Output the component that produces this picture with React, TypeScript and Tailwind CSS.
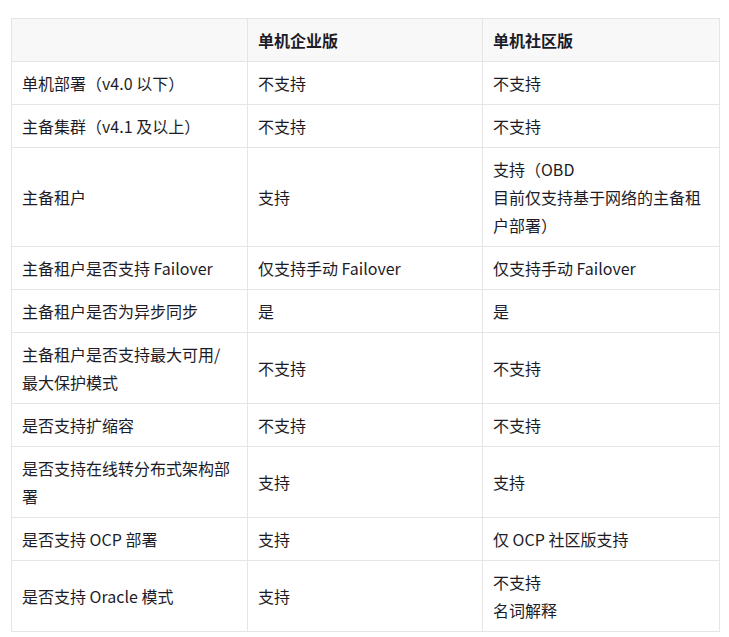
const rows: [string, string, string][] = [
  ['单机部署（v4.0 以下）', '不支持', '不支持'],
  ['主备集群（v4.1 及以上）', '不支持', '不支持'],
  ['主备租户', '支持', '支持（OBD\n目前仅支持基于网络的主备租户部署）'],
  ['主备租户是否支持 Failover', '仅支持手动 Failover', '仅支持手动 Failover'],
  ['主备租户是否为异步同步', '是', '是'],
  ['主备租户是否支持最大可用/\n最大保护模式', '不支持', '不支持'],
  ['是否支持扩缩容', '不支持', '不支持'],
  ['是否支持在线转分布式架构部署', '支持', '支持'],
  ['是否支持 OCP 部署', '支持', '仅 OCP 社区版支持'],
  ['是否支持 Oracle 模式', '支持', '不支持\n名词解释'],
];

function Cell({ text, head }: { text: string; head?: boolean }) {
  const cls =
    'border border-[#e5e5e5] px-[10px] py-[7px] align-middle text-left break-all whitespace-pre-line ' +
    (head ? 'font-bold bg-[#f8f8f8]' : 'font-normal');
  return head ? <th className={cls}>{text}</th> : <td className={cls}>{text}</td>;
}

export default function App() {
  return (
    <div className="min-h-screen bg-white pt-[18px] px-[11px]">
      <table
        className="w-[708px] table-fixed border-collapse text-[16px] leading-[28px] text-[#1c1c28]"
        style={{ fontFamily: '"Noto Sans CJK SC", "Noto Sans", sans-serif' }}
      >
        <colgroup>
          <col className="w-[236px]" />
          <col className="w-[235px]" />
          <col className="w-[237px]" />
        </colgroup>
        <thead>
          <tr>
            <Cell text="" head />
            <Cell text="单机企业版" head />
            <Cell text="单机社区版" head />
          </tr>
        </thead>
        <tbody>
          {rows.map((r) => (
            <tr key={r[0]}>
              <Cell text={r[0]} />
              <Cell text={r[1]} />
              <Cell text={r[2]} />
            </tr>
          ))}
        </tbody>
      </table>
    </div>
  );
}
